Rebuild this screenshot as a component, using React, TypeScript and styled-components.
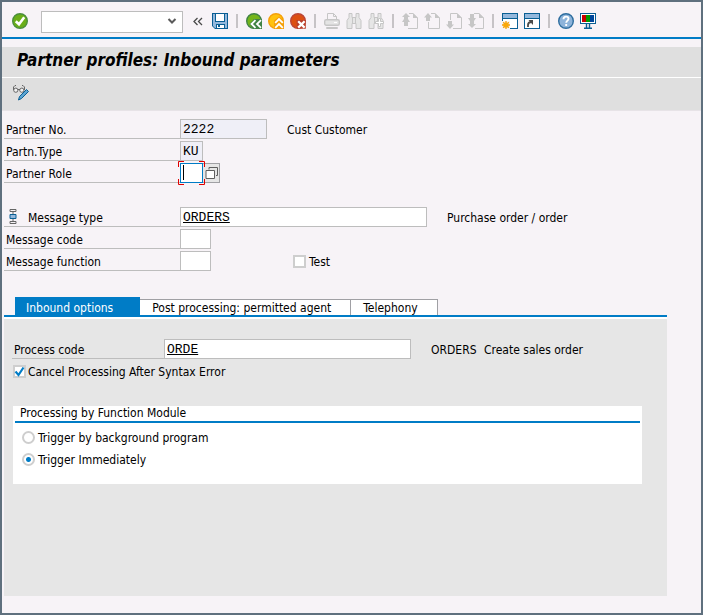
import React, { useState } from "react";
import type { ReactNode } from "react";
import styled, { createGlobalStyle, css } from "styled-components";

const color = {
  frame: "#5f707e",
  page: "#f7f3f7",
  bar: "#dfdfdf",
  panel: "#e6e6e6",
  blue: "#007cc6",
  line: "#bdbdbd",
  edge: "#a0a0a4",
  readonly: "#efeff7",
  disabled: "#c6c6c6",
  navy: "#0a5f94",
  light: "#94b8dc",
};

const GlobalStyle = createGlobalStyle`
  *, *::before, *::after { box-sizing: border-box; }
  body { margin: 0; }
  body, button, input, select {
    font-family: "DejaVu Sans Condensed", "DejaVu Sans", Tahoma, sans-serif;
    font-stretch: condensed;
    font-size: 12px;
    line-height: 16px;
    color: #000;
  }
`;

const Window = styled.div`
  display: flex;
  flex-direction: column;
  min-height: 100vh;
  border: 2px solid ${color.frame};
  background: ${color.page};
`;

const Toolbar = styled.header`
  display: flex;
  align-items: center;
  gap: 6px;
  height: 37px;
  padding: 3px 10px 0;
  border-bottom: 2px solid ${color.blue};
`;

const IconButton = styled.button`
  display: flex;
  flex: none;
  width: 16px;
  height: 16px;
  padding: 0;
  border: 0;
  background: none;
`;

const CollapseButton = styled(IconButton)`
  margin: 0 -2px 0 3px;
`;

const Separator = styled.span`
  flex: none;
  width: 2px;
  height: 14px;
  margin: 0 2px;
  background: #c6c3c6;
`;

const CommandBox = styled.div`
  position: relative;
  width: 142px;
  height: 22px;
  margin: 2px 0 0 7px;
`;

const CommandSelect = styled.select`
  appearance: none;
  width: 100%;
  height: 100%;
  padding: 0 22px 0 4px;
  border: 1px solid ${color.line};
  border-radius: 0;
  background: #fff;
`;

const CommandArrow = styled.svg`
  position: absolute;
  right: 6px;
  top: 6px;
  pointer-events: none;
`;

const TitleBar = styled.div`
  margin-top: 8px;
  padding: 1px 15px 5px;
  border-bottom: 1px solid #fff;
  background: ${color.bar};
`;

const Title = styled.h1`
  margin: 0;
  font-size: 17px;
  line-height: 24px;
  font-weight: bold;
  font-style: italic;
`;

const AppBar = styled.div`
  display: flex;
  padding: 7px 11px 9px;
  border-bottom: 1px solid #e7e3e7;
  background: ${color.bar};
`;

const Fields = styled.section`
  display: flex;
  flex-direction: column;
  gap: 2px;
  padding: 8px 2px 0;
`;

const MessageFields = styled(Fields)`
  padding-top: 24px;
`;

const Row = styled.div`
  display: flex;
  align-items: center;
  height: 20px;
`;

const Label = styled.label<{ $width: number }>`
  display: flex;
  align-items: center;
  flex: none;
  gap: 11px;
  width: ${(p) => p.$width}px;
  height: 20px;
  padding: 2px 2px 0;
  border-bottom: 1px solid ${color.line};
`;

const MessageLabel = styled(Label)`
  padding: 0 0 0 5px;
`;

const Field = styled.input<{ $width: number }>`
  flex: none;
  width: ${(p) => p.$width}px;
  height: 20px;
  padding: 1px 2px 0;
  border: 1px solid ${color.line};
  border-radius: 0;
  outline: none;
  background: #fff;
  font-family: "Liberation Mono", "Courier New", monospace;
  font-size: 13px;
  text-decoration: underline;

  &:read-only {
    background: ${color.readonly};
    text-decoration: none;
  }
`;

const FocusedField = styled(Field)`
  border-color: ${color.blue};
  caret-color: transparent;
  background: linear-gradient(#000, #000) 2px 1px / 1px 15px no-repeat #fff;
`;

const FocusFrame = styled.div`
  position: relative;
  display: flex;
`;

const FocusCorners = styled.svg`
  position: absolute;
  left: -2px;
  top: -2px;
  pointer-events: none;
`;

const MatchButton = styled.button`
  display: flex;
  align-items: center;
  justify-content: center;
  width: 17px;
  height: 20px;
  padding: 0;
  border: 1px solid ${color.edge};
  border-left: 0;
  background: ${color.panel};
`;

const Description = styled.span`
  margin-left: 20px;
  padding-top: 2px;
`;

const ProcessKey = styled(Description)`
  width: 53px;
`;

const FieldText = styled.span`
  padding-top: 2px;
`;

const Choice = styled.label`
  display: flex;
  align-items: center;
  gap: 3px;
  height: 20px;
`;

const TestChoice = styled(Choice)`
  margin-left: 82px;
`;

const choiceBox = css`
  appearance: none;
  width: 13px;
  height: 13px;
  margin: 0;
  border: 2px solid #cecece;
  background: #fff;
`;

const CheckFrame = styled.span`
  position: relative;
  display: flex;
`;

const CheckInput = styled.input`
  ${choiceBox}

  & + svg { visibility: hidden; }
  &:checked + svg { visibility: visible; }
`;

const CheckMark = styled.svg`
  position: absolute;
  left: 0;
  top: 0;
  pointer-events: none;
`;

const RadioInput = styled.input`
  ${choiceBox}
  border-radius: 50%;

  &:checked {
    background: radial-gradient(circle, ${color.blue} 2px, #fff 3px);
  }
`;

const TabArea = styled.main`
  display: flex;
  flex: 1;
  flex-direction: column;
  margin: 26px 34px 17px 2px;
`;

const TabList = styled.div`
  display: flex;
  align-items: flex-end;
  padding-left: 11px;
  border-bottom: 2px solid ${color.blue};
`;

const Tab = styled.button<{ $active: boolean }>`
  height: 16px;
  padding: 1px 19px 0 12px;
  border: 1px solid ${color.edge};
  border-width: 1px 1px 0 0;
  background: #fff;
  line-height: 15px;

  ${(p) =>
    p.$active &&
    css`
      height: 18px;
      padding: 4px 27px 0 11px;
      border: 0;
      background: ${color.blue};
      color: #fff;
    `}
`;

const Panel = styled.div`
  flex: 1;
  padding: 20px 25px 20px 8px;
  border-top: 2px solid #fff;
  background: ${color.panel};
`;

const CancelChoice = styled(Choice)`
  gap: 2px;
  margin: 2px 0 0 1px;
`;

const Group = styled.fieldset`
  min-width: 0;
  margin: 25px 0 0 1px;
  padding: 0 2px 15px;
  border: 0;
  background: #fff;
`;

const GroupTitle = styled.legend`
  float: left;
  width: 100%;
  margin-bottom: 4px;
  padding: 0 5px;
  border-bottom: 2px solid ${color.blue};
  line-height: 15px;
`;

const GroupChoices = styled.div`
  clear: both;
  display: flex;
  flex-direction: column;
  gap: 2px;
  padding-left: 7px;
`;

function Glyph({ children }: { children: ReactNode }) {
  return (
    <svg width="16" height="16" viewBox="0 0 16 16" fill="none" aria-hidden="true">
      {children}
    </svg>
  );
}

const EnterIcon = () => (
  <Glyph>
    <circle cx="8" cy="8" r="7.3" fill="#6aae18" stroke="#4b8f3c" strokeWidth="1.4" />
    <path d="M3.8 8.2 7 11.3 12.2 4.3" stroke="#fff" strokeWidth="2.6" />
  </Glyph>
);

const CollapseIcon = () => (
  <Glyph>
    <path d="M5.5 5 2 8.5 5.5 12M10 5 6.5 8.5 10 12" stroke="#4a4a4a" strokeWidth="1.3" />
  </Glyph>
);

const SaveIcon = () => (
  <Glyph>
    <path d="M0 0h16v16H3l-3-3z" fill={color.navy} />
    <path d="M1 1h2v8h10V1h2v14h-2v-4H4v4H3l-2-2z" fill={color.light} />
    <path d="M3 9h10v2H3z" fill={color.light} />
    <path d="M4 1h8v7H4zM5 12h7v3H5z" fill="#fff" />
    <path d="M6 12h2v2H6z" fill={color.navy} />
  </Glyph>
);

const BackIcon = () => (
  <Glyph>
    <circle cx="8" cy="8" r="7.3" fill="#74b51c" stroke="#418346" strokeWidth="1.4" />
    <path d="M16 6v10H7L3.5 11 8 6z" fill="#418346" />
    <path d="M9.5 7.2 5.5 11l4 3.8M15 7.2 11 11l4 3.8" stroke="#fff" strokeWidth="1.8" />
  </Glyph>
);

const ExitIcon = () => (
  <Glyph>
    <circle cx="8" cy="8" r="7.3" fill="#ffc20e" stroke="#f5a00b" strokeWidth="1.4" />
    <path d="M6 7.5 11 3.5l5 4V16H6z" fill="#f5a00b" />
    <path d="M7.2 9.8 11 6l3.8 3.8M7.2 14.8 11 11l3.8 3.8" stroke="#fff" strokeWidth="1.8" />
  </Glyph>
);

const CancelIcon = () => (
  <Glyph>
    <circle cx="8" cy="8" r="7.3" fill="#dc4f12" stroke="#bb4638" strokeWidth="1.4" />
    <path d="M6.5 7h9.3v8.8H7z" fill="#b93f2b" />
    <path d="m8.2 8.2 6.4 6.4m0-6.4-6.4 6.4" stroke="#fff" strokeWidth="2.2" />
  </Glyph>
);

const PrintIcon = () => (
  <Glyph>
    <path d="M3.5 7V.5h6l3 3V7M9.5.5v3h3" stroke={color.disabled} />
    <rect x=".7" y="6.7" width="14.6" height="5.6" rx="1.5" fill="#e4e4e4" stroke={color.disabled} strokeWidth="1.4" />
    <path d="M10 9.5h3" stroke="#fff" />
    <path d="M2.5 15.5v-1h11v1z" stroke={color.disabled} />
  </Glyph>
);

const Binoculars = () => (
  <>
    <path
      d="M3 .5h3v4h4v-4h3v4l2 3v8h-5v-5H6v5H1v-8l2-3z"
      fill="#e6e6e6"
      stroke={color.disabled}
    />
    <path d="M6.5 5v5m3-5v5" stroke={color.disabled} />
  </>
);

const FindIcon = () => (
  <Glyph>
    <Binoculars />
  </Glyph>
);

const FindNextIcon = () => (
  <Glyph>
    <Binoculars />
    <path
      d="M10.5 5.5h2v3h3v2h-3v3h-2v-3h-3v-2h3z"
      fill="#fff"
      stroke={color.disabled}
    />
  </Glyph>
);

const Fold = () => <path d="M11 0v5h5z" fill={color.disabled} />;

const FirstPageIcon = () => (
  <Glyph>
    <path d="M7 .5h4L15.500 5v10.500H6" stroke={color.disabled} />
    <Fold />
    <path d="M4 0 8 4H6v2l2 3H6v4H2V9H0l2-3V4H0z" fill={color.disabled} />
  </Glyph>
);

const PreviousPageIcon = () => (
  <Glyph>
    <path d="M4.5 9v6.5h11V5L11 .5H7" stroke={color.disabled} />
    <Fold />
    <path d="M4 0 8 4.5H6V8H2V4.5H0z" fill={color.disabled} />
  </Glyph>
);

const NextPageIcon = () => (
  <Glyph>
    <path d="M4.5 7V.5H11L15.5 5v10.5H7" stroke={color.disabled} />
    <Fold />
    <path d="M4 16 8 11.5H6V8H2v3.5H0z" fill={color.disabled} />
  </Glyph>
);

const LastPageIcon = () => (
  <Glyph>
    <path d="M6 .5h5L15.5 5v10.5H7" stroke={color.disabled} />
    <Fold />
    <path d="M2 1h4v4h2L6 8v3h2l-4 4-4-4h2V8L0 5h2z" fill={color.disabled} />
  </Glyph>
);

const WindowFrame = () => (
  <>
    <path d="M0 0h16v16H0z" fill={color.navy} />
    <path d="M1 1h14v4H1z" fill={color.light} />
    <path d="M1 6h14v9H1z" fill="#fff" />
  </>
);

const NewSessionIcon = () => (
  <Glyph>
    <WindowFrame />
    <path d="M0 8h8v8H0z" fill={color.page} />
    <path d="M4 8v8M0 12h8M1.2 9.2l5.6 5.6M6.8 9.2l-5.6 5.6" stroke="#f5a00b" strokeWidth="1.3" />
    <circle cx="4" cy="12" r="2.6" fill="#f9a70a" />
  </Glyph>
);

const ShortcutIcon = () => (
  <Glyph>
    <WindowFrame />
    <path d="M4 14v-2c0-2 1.2-3 3.5-3" stroke="#4a4a4a" strokeWidth="1.8" />
    <path d="M4.5 7H9v5z" fill="#4a4a4a" />
  </Glyph>
);

const HelpIcon = () => (
  <Glyph>
    <circle cx="8" cy="8" r="7.3" fill="#8db3da" stroke="#2f6e9f" strokeWidth="1.4" />
    <path d="M5.5 6.2c0-3.4 5-3.4 5-.4 0 1.8-2.3 1.9-2.3 4M8.2 11v2" stroke="#fff" strokeWidth="1.9" />
  </Glyph>
);

const MonitorIcon = () => (
  <Glyph>
    <path d="M0 0h16v11H0z" fill={color.navy} />
    <path d="M1 1h14v9H1z" fill="#fff" />
    <path d="M2 2h4v7H2z" fill="#c80000" />
    <path d="M6 2h4v7H6z" fill="#009a00" />
    <path d="M10 2h4v7h-4z" fill="#00479c" />
    <path d="M6.5 11v4m3-4v4M4 15.3h8" stroke={color.navy} strokeWidth="1.4" />
  </Glyph>
);

const DisplayChangeIcon = () => (
  <Glyph>
    <path d="M.5 5V2L2 .5h1M11.5 5V2L10 .5H9M5 4.5h2" stroke="#666" />
    <circle cx="2.8" cy="5.2" r="2.1" fill="#f2f2f2" stroke="#666" />
    <circle cx="8.8" cy="5.2" r="2.1" fill="#f2f2f2" stroke="#666" />
    <path d="m5.5 15 1-3.500 7-7 2 2-7 7z" fill="#5da5d2" stroke={color.navy} />
  </Glyph>
);

const LinkNodeIcon = () => (
  <svg width="8" height="15" viewBox="0 0 8 15" fill="none" aria-hidden="true">
    <path d="M1 .5h6v2H1zM1 12.5h6v2H1zM4 2.5V5m0 5v2.5" stroke="#666" />
    <path d="M1 5.5h6v4H1z" fill={color.light} stroke={color.navy} />
  </svg>
);

const MatchIcon = () => (
  <svg width="13" height="14" viewBox="0 0 13 14" fill="none" aria-hidden="true">
    <path d="M4 3.5v-2h8.5v8H11" stroke="#5f5f5f" />
    <path d="M1 4.5h8.5v8H1z" fill="#fff" stroke="#5f5f5f" />
  </svg>
);

type Tool = { name: string; icon: () => React.JSX.Element; disabled?: boolean };

const toolGroups: Tool[][] = [
  [
    { name: "Back", icon: BackIcon },
    { name: "Exit", icon: ExitIcon },
    { name: "Cancel", icon: CancelIcon },
  ],
  [
    { name: "Print", icon: PrintIcon, disabled: true },
    { name: "Find", icon: FindIcon, disabled: true },
    { name: "Find next", icon: FindNextIcon, disabled: true },
  ],
  [
    { name: "First page", icon: FirstPageIcon, disabled: true },
    { name: "Previous page", icon: PreviousPageIcon, disabled: true },
    { name: "Next page", icon: NextPageIcon, disabled: true },
    { name: "Last page", icon: LastPageIcon, disabled: true },
  ],
  [
    { name: "New session", icon: NewSessionIcon },
    { name: "Create shortcut", icon: ShortcutIcon },
  ],
  [
    { name: "Help", icon: HelpIcon },
    { name: "Customize local layout", icon: MonitorIcon },
  ],
];

const tabs = ["Inbound options", "Post processing: permitted agent", "Telephony"];

function Checkbox({ defaultChecked = false }: { defaultChecked?: boolean }) {
  return (
    <CheckFrame>
      <CheckInput type="checkbox" defaultChecked={defaultChecked} />
      <CheckMark width="13" height="13" viewBox="0 0 13 13" fill="none" aria-hidden="true">
        <path d="M2.5 6.5 5.5 10 10.5 2.5" stroke={color.blue} strokeWidth="2.2" />
      </CheckMark>
    </CheckFrame>
  );
}

export default function App() {
  const [activeTab, setActiveTab] = useState(0);

  return (
    <Window>
      <GlobalStyle />
      <Toolbar>
        <IconButton aria-label="Enter">
          <EnterIcon />
        </IconButton>
        <CommandBox>
          <CommandSelect aria-label="Command">
            <option value="" />
          </CommandSelect>
          <CommandArrow width="10" height="8" viewBox="0 0 10 8" fill="none" aria-hidden="true">
            <path d="M1.5 2 5 5.5 8.5 2" stroke="#5a5a5a" strokeWidth="2" />
          </CommandArrow>
        </CommandBox>
        <CollapseButton aria-label="Collapse command field">
          <CollapseIcon />
        </CollapseButton>
        <IconButton aria-label="Save">
          <SaveIcon />
        </IconButton>
        {toolGroups.map((group) => (
          <React.Fragment key={group[0].name}>
            <Separator />
            {group.map(({ name, icon: Icon, disabled }) => (
              <IconButton key={name} aria-label={name} disabled={disabled}>
                <Icon />
              </IconButton>
            ))}
          </React.Fragment>
        ))}
      </Toolbar>

      <TitleBar>
        <Title>Partner profiles: Inbound parameters</Title>
      </TitleBar>
      <AppBar>
        <IconButton aria-label="Display or change">
          <DisplayChangeIcon />
        </IconButton>
      </AppBar>

      <Fields>
        <Row>
          <Label htmlFor="partner-no" $width={176}>Partner No.</Label>
          <Field id="partner-no" $width={87} defaultValue="2222" readOnly />
          <Description>Cust Customer</Description>
        </Row>
        <Row>
          <Label htmlFor="partner-type" $width={176}>Partn.Type</Label>
          <Field id="partner-type" $width={23} defaultValue="KU" readOnly />
        </Row>
        <Row>
          <Label htmlFor="partner-role" $width={176}>Partner Role</Label>
          <FocusFrame>
            <FocusedField id="partner-role" $width={23} />
            <MatchButton aria-label="Possible entries for partner role">
              <MatchIcon />
            </MatchButton>
            <FocusCorners width="27" height="24" viewBox="0 0 27 24" fill="none" aria-hidden="true">
              <path d="M.5 6V.5H6M21 .5h5.5V6M.5 18v5.5H6M21 23.5h5.5V18" stroke="#e00000" />
            </FocusCorners>
          </FocusFrame>
        </Row>
      </Fields>

      <MessageFields>
        <Row>
          <MessageLabel htmlFor="message-type" $width={176}>
            <LinkNodeIcon />
            <FieldText>Message type</FieldText>
          </MessageLabel>
          <Field id="message-type" $width={247} defaultValue="ORDERS" />
          <Description>Purchase order / order</Description>
        </Row>
        <Row>
          <Label htmlFor="message-code" $width={176}>Message code</Label>
          <Field id="message-code" $width={31} />
        </Row>
        <Row>
          <Label htmlFor="message-function" $width={176}>Message function</Label>
          <Field id="message-function" $width={31} />
          <TestChoice>
            <Checkbox />
            <FieldText>Test</FieldText>
          </TestChoice>
        </Row>
      </MessageFields>

      <TabArea>
        <TabList role="tablist">
          {tabs.map((tab, index) => (
            <Tab
              key={tab}
              role="tab"
              aria-selected={index === activeTab}
              $active={index === activeTab}
              onClick={() => setActiveTab(index)}
            >
              {tab}
            </Tab>
          ))}
        </TabList>
        <Panel role="tabpanel">
          <Row>
            <Label htmlFor="process-code" $width={152}>Process code</Label>
            <Field id="process-code" $width={247} defaultValue="ORDE" />
            <ProcessKey>ORDERS</ProcessKey>
            <FieldText>Create sales order</FieldText>
          </Row>
          <CancelChoice>
            <Checkbox defaultChecked />
            <FieldText>Cancel Processing After Syntax Error</FieldText>
          </CancelChoice>
          <Group>
            <GroupTitle>Processing by Function Module</GroupTitle>
            <GroupChoices>
              <Choice>
                <RadioInput type="radio" name="trigger" />
                <FieldText>Trigger by background program</FieldText>
              </Choice>
              <Choice>
                <RadioInput type="radio" name="trigger" defaultChecked />
                <FieldText>Trigger Immediately</FieldText>
              </Choice>
            </GroupChoices>
          </Group>
        </Panel>
      </TabArea>
    </Window>
  );
}
